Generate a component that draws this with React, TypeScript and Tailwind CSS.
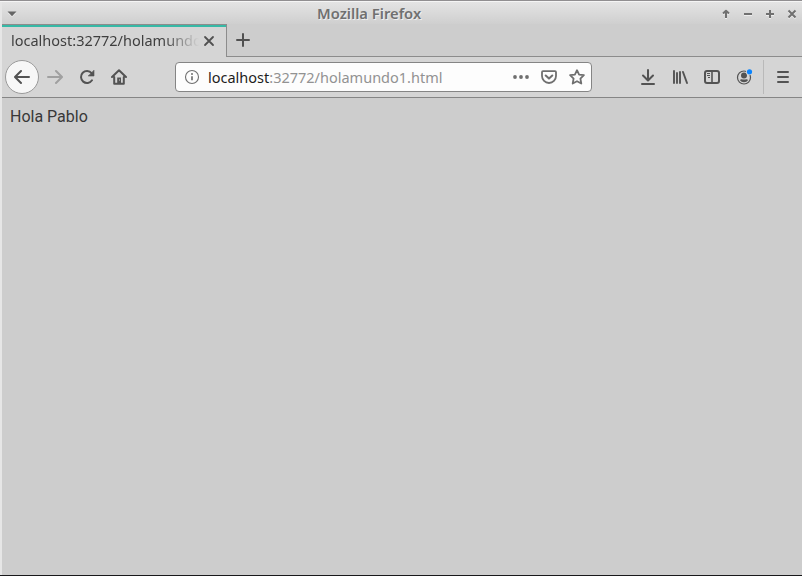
import React from "react";

type IconProps = { children: React.ReactNode; className?: string };

function Icon({ children, className = "" }: IconProps) {
  return (
    <svg
      viewBox="0 0 16 16"
      fill="none"
      stroke="currentColor"
      strokeWidth="2"
      strokeLinecap="round"
      strokeLinejoin="round"
      className={`block h-4 w-4 shrink-0 ${className}`}
    >
      {children}
    </svg>
  );
}

function TitleBar() {
  return (
    <header className="flex h-[23px] items-center bg-linear-to-b from-[#e4e4e4] to-[#cecece] text-[#707070]">
      <svg viewBox="0 0 10 6" className="ml-[5px] mt-px h-[6px] w-[10px] shrink-0">
        <path d="M1 2h8L5 6z" fill="#fff" opacity=".7" />
        <path d="M.5 .6h9L5 5.200z" fill="#666" />
      </svg>
      <h1 className="ml-[300px] w-[110px] whitespace-nowrap pb-[2px] text-[14.75px] leading-5 font-semibold [text-shadow:1px_1px_0_#eeeeee]">
        Mozilla Firefox
      </h1>
      <div className="ml-auto flex items-center gap-[6px] pr-[2px]">
        <Icon className="drop-shadow-[0_1px_0_#eeeeee]">
          <path d="M8 12V5M5 7.5L8 4.8l3 2.7" strokeLinecap="butt" />
        </Icon>
        <Icon className="drop-shadow-[0_1px_0_#eeeeee]">
          <path d="M4 8h8" strokeLinecap="butt" />
        </Icon>
        <Icon className="drop-shadow-[0_1px_0_#eeeeee]">
          <path d="M4 8h8M8 4v8" strokeLinecap="butt" />
        </Icon>
        <Icon className="drop-shadow-[0_1px_0_#eeeeee]">
          <path d="M4.5 4.5l7 7M11.5 4.5l-7 7" strokeLinecap="butt" />
        </Icon>
      </div>
    </header>
  );
}

function TabStrip() {
  return (
    <div className="flex h-[33px] bg-[#cdcdcd]">
      <div className="flex w-[225px] shrink-0 flex-col border-t border-r border-[#8c8c8c] bg-[#d5d5d5]">
        <div className="h-[2px] shrink-0 bg-[#36b9a6]" />
        <div className="flex h-[27px] items-center pl-[9px] text-[#3f3f3f]">
          <span className="w-[188px] overflow-hidden whitespace-nowrap pb-[2px] text-[14.5px] leading-[22px] [mask-image:linear-gradient(to_right,#000_152px,transparent_188px)]">
            localhost:32772/holamundo1.html
          </span>
          <Icon className="ml-[2px] text-[#505050]">
            <path d="M4 4l8 8M12 4l-8 8" strokeWidth="1.8" />
          </Icon>
        </div>
      </div>
      <div className="flex flex-1 items-start border-b border-[#8c8c8c] pt-[8px] pl-[8px] text-[#505050]">
        <Icon>
          <path d="M2 8h12M8 2v12" />
        </Icon>
      </div>
    </div>
  );
}

function AddressField() {
  return (
    <div className="ml-[48px] flex h-[30px] w-[417px] shrink-0 items-center rounded-[4px] border border-[#858585] bg-[#fdfdfd] pl-[8px] text-[#6f6f6f]">
      <Icon>
        <circle cx="8" cy="8" r="6.5" strokeWidth="1.1" />
        <path d="M8 7.3v4" strokeWidth="1.7" strokeLinecap="butt" />
        <circle cx="8" cy="4.9" r="1" fill="currentColor" stroke="none" />
      </Icon>
      <span className="ml-[8px] w-[305px] whitespace-nowrap text-[14.5px] leading-[22px] text-[#929292]">
        <span className="text-[#1d1d1d]">localhost</span>:32772/holamundo1.html
      </span>
      <Icon>
        <g fill="currentColor" stroke="none">
          <circle cx="2" cy="8" r="1.900" />
          <circle cx="8" cy="8" r="1.900" />
          <circle cx="14" cy="8" r="1.900" />
        </g>
      </Icon>
      <Icon className="ml-[12px]">
        <path d="M2 2.2h12c.6 0 1 .4 1 1V7a7 7 0 0 1-14 0V3.200c0-.6.4-1 1-1z" strokeWidth="1.8" />
        <path d="M4.7 6.5L8 9.6l3.300-3.100" />
      </Icon>
      <Icon className="ml-[12px]">
        <path
          d="M8 1.200l2.100 4.400 4.800.6-3.500 3.400.9 4.900L8 12.200l-4.300 2.300.9-4.900L1.100 6.200l4.800-.6z"
          strokeWidth="1.800"
        />
      </Icon>
    </div>
  );
}

function Toolbar() {
  return (
    <nav className="flex h-[41px] items-center border-b border-[#858585] bg-[#d5d5d5] pl-[3px] text-[#535353]">
      <div className="flex h-[34px] w-[34px] shrink-0 items-center justify-center rounded-full border border-[#9a9a9a] bg-[#f7f7f7]">
        <Icon>
          <path d="M15 8H1.500M7 2L1 8l6 6" />
        </Icon>
      </div>
      <Icon className="ml-[8px] text-[#a0a0a0]">
        <path d="M1 8h13.500M9 2l6 6-6 6" />
      </Icon>
      <Icon className="ml-[16px]">
        <path d="M13 11.300A6 6 0 1 1 12.600 4.100" />
        <path d="M15 1.500v5.500H9.500z" fill="currentColor" strokeWidth=".6" />
      </Icon>
      <Icon className="ml-[16px]">
        <path d="M1 8l7-6.700L15 8M3.200 8v6.700h9.600V8" />
        <path d="M6.200 14V8.500h3.800V14z" fill="currentColor" stroke="none" />
        <path d="M8.500 10.500v1" stroke="#d5d5d5" strokeWidth="1" strokeLinecap="butt" />
      </Icon>
      <AddressField />
      <div className="ml-[48px] flex items-center gap-[16px]">
        <Icon>
          <path d="M8 1v10M3 6.500l5 5 5-5M2 15h12" />
        </Icon>
        <Icon>
          <path d="M2 2v12M5 4v10M8 3v11M11 3l4 11" strokeWidth="1.900" />
        </Icon>
        <Icon>
          <rect x="1" y="2" width="14" height="12" rx="2" />
          <path d="M8 2v12" strokeWidth="1.600" />
          <path d="M3 4.500h3M3 6.500h3M4 8.500h2" strokeWidth="1" strokeLinecap="butt" />
        </Icon>
        <Icon className="overflow-visible">
          <circle cx="8" cy="8.500" r="6.500" strokeWidth="1.200" />
          <circle cx="8" cy="6.500" r="3" fill="currentColor" stroke="none" />
          <path d="M3.800 11c1.200-1 2.100-.8 2.700-.5h3c.6-.3 1.500-.5 2.700.5a5 5 0 0 1-8.400 0z" fill="currentColor" stroke="none" />
          <circle cx="13.500" cy="2.800" r="3.500" fill="#d5d5d5" stroke="none" />
          <circle cx="13.500" cy="2.800" r="2.600" fill="#0a84ff" stroke="none" />
        </Icon>
      </div>
      <div className="ml-[11px] h-[34px] w-px bg-[#b9b9b9]" />
      <Icon className="ml-[11px]">
        <path d="M3 3h10M3 8h10M3 13h10" />
      </Icon>
    </nav>
  );
}

export default function App() {
  return (
    <div className="flex h-[576px] w-[802px] flex-col overflow-hidden bg-[#e6e6e6] font-['Noto_Sans',sans-serif]">
      <div className="h-px shrink-0 bg-[#918f91]" />
      <div className="flex flex-1 flex-col border-t border-t-[#f5f5f5] border-b border-b-[#18181a]">
        <div className="ml-[2px] flex flex-1 flex-col">
          <div className="-mb-px"><TitleBar /></div>
          <TabStrip />
          <Toolbar />
          <main className="flex-1 bg-[#cdcdcd] px-[8px] pt-[9px] font-[Roboto,sans-serif] text-base leading-[19px] text-[#383838]">
            Hola Pablo
          </main>
        </div>
      </div>
    </div>
  );
}
